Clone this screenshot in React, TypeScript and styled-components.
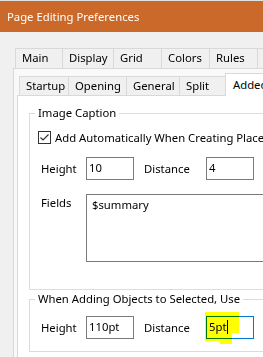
import React from "react";
import styled, { createGlobalStyle } from "styled-components";

const GlobalStyle = createGlobalStyle`
  html, body { margin: 0; padding: 0; background: #f0f0f0; }
  body { font-family: "Noto Sans", "Segoe UI", sans-serif; font-size: 11.3px; color: #000; }
  * { box-sizing: border-box; }
`;

const Window = styled.div`
  width: 263px;
  height: 357px;
  overflow: hidden;
  background: #f0f0f0;
`;

const TopEdge = styled.div`
  height: 1px;
  background: #e2e2e2;
`;

const TitleBar = styled.div`
  height: 31px;
  background: #ca692a;
  color: #fff;
  display: flex;
  align-items: center;
  padding-left: 7px;
  font-size: 11.3px;
`;

const Body = styled.div`
  padding: 16px 0 0 13px;
`;

const TabStrip = styled.div<{ $indent: number; $height: number }>`
  display: flex;
  align-items: flex-end;
  height: ${(p) => p.$height}px;
  padding-left: ${(p) => p.$indent}px;
`;

const Tab = styled.div<{ $width: number; $height: number; $selected?: boolean }>`
  flex-shrink: 0;
  width: ${(p) => p.$width}px;
  height: ${(p) => (p.$selected ? p.$height + 4 : p.$height)}px;
  margin-bottom: ${(p) => (p.$selected ? -1 : 0)}px;
  margin-right: -1px;
  border: 1px solid #d9d9d9;
  border-bottom: none;
  background: ${(p) => (p.$selected ? "#ffffff" : "#f0f0f0")};
  position: relative;
  z-index: ${(p) => (p.$selected ? 1 : 0)};
  padding: ${(p) => (p.$selected ? 2 : 0)}px 0 0 ${(p) => (p.$selected ? 7 : 6)}px;
  line-height: ${(p) => p.$height - 2}px;
  white-space: nowrap;
`;

const OuterPanel = styled.div`
  width: 400px;
  height: 300px;
  border-top: 1px solid #d9d9d9;
  border-left: 1px solid #d9d9d9;
  background: #f9f9f9;
  padding: 7px 0 0 3px;
`;

const InnerPanel = styled.div`
  width: 400px;
  height: 300px;
  border-top: 1px solid #d9d9d9;
  border-left: 1px solid #d9d9d9;
  background: #ffffff;
  padding: 9px 0 0 11px;
`;

const Group = styled.fieldset<{ $gap?: number }>`
  margin: ${(p) => p.$gap ?? 0}px 0 0 0;
  padding: 0;
  width: 320px;
  min-width: 0;
  border: 1px solid #dcdcdc;
`;

const Legend = styled.legend`
  margin-left: 5px;
  padding: 0 3px;
  line-height: 16px;
  font-size: 11.3px;
`;

const GroupBody = styled.div<{ $top: number; $bottom: number }>`
  display: flex;
  flex-direction: column;
  padding: ${(p) => p.$top}px 0 ${(p) => p.$bottom}px 8px;
`;

const CheckRow = styled.label`
  display: flex;
  align-items: center;
  gap: 4px;
  height: 13px;
  white-space: nowrap;
`;

const CheckBox = styled.span`
  flex-shrink: 0;
  width: 13px;
  height: 13px;
  border: 1px solid #333333;
  background: #fff;
  display: flex;
  align-items: center;
  justify-content: center;
`;

const FieldRow = styled.div<{ $top: number; $alignTop?: boolean }>`
  display: flex;
  align-items: ${(p) => (p.$alignTop ? "flex-start" : "center")};
  margin-top: ${(p) => p.$top}px;
  padding-left: 3px;
`;

const Label = styled.span<{ $width: number; $pad?: number }>`
  flex-shrink: 0;
  width: ${(p) => p.$width}px;
  padding-top: ${(p) => p.$pad ?? 0}px;
  line-height: 16px;
`;

const TextBox = styled.div<{ $focused?: boolean }>`
  position: relative;
  flex-shrink: 0;
  width: 48px;
  height: 23px;
  border: 1px solid ${(p) => (p.$focused ? "#0078d7" : "#7a7a7a")};
  background: #fff;
  padding-left: 2px;
  line-height: 20px;
  margin-right: 10px;
`;

const TextArea = styled.div`
  flex-shrink: 0;
  width: 200px;
  height: 68px;
  border: 1px solid #7a7a7a;
  background: #fff;
  padding: 2px 5px;
  line-height: 16px;
`;

const Highlight = styled.svg`
  position: absolute;
  left: -3px;
  top: -6px;
  mix-blend-mode: multiply;
  pointer-events: none;
`;

const BoxText = styled.span`
  position: relative;
  display: inline-flex;
  align-items: center;
`;

const Caret = styled.span`
  display: inline-block;
  width: 1px;
  height: 14px;
  background: #000;
`;

const outerTabs = [
  { label: "Main", width: 48 },
  { label: "Display", width: 52 },
  { label: "Grid", width: 49 },
  { label: "Colors", width: 49 },
  { label: "Rules", width: 49 },
  { label: "", width: 60 },
];

const innerTabs = [
  { label: "Startup", width: 50 },
  { label: "Opening", width: 59 },
  { label: "General", width: 54 },
  { label: "Split", width: 47 },
  { label: "Added Objects", width: 100, selected: true },
];

export default function App() {
  return (
    <>
      <GlobalStyle />
      <Window>
        <TopEdge />
        <TitleBar>Page Editing Preferences</TitleBar>
        <Body>
          <TabStrip $indent={2} $height={20}>
            {outerTabs.map((t, i) => (
              <Tab key={i} $width={t.width} $height={20}>
                {t.label}
              </Tab>
            ))}
          </TabStrip>
          <OuterPanel>
            <TabStrip $indent={2} $height={19}>
              {innerTabs.map((t) => (
                <Tab key={t.label} $width={t.width} $height={19} $selected={t.selected}>
                  {t.label}
                </Tab>
              ))}
            </TabStrip>
            <InnerPanel>
              <Group>
                <Legend>Image Caption</Legend>
                <GroupBody $top={10} $bottom={27}>
                  <CheckRow>
                    <CheckBox>
                      <svg width="11" height="11" viewBox="0 0 11 11">
                        <path d="M1.5 5.5 L4 8 L9.5 2.5" fill="none" stroke="#333" strokeWidth="1.2" />
                      </svg>
                    </CheckBox>
                    Add Automatically When Creating Placeholders
                  </CheckRow>
                  <FieldRow $top={13}>
                    <Label $width={45}>Height</Label>
                    <TextBox>10</TextBox>
                    <Label $width={62}>Distance</Label>
                    <TextBox>4</TextBox>
                  </FieldRow>
                  <FieldRow $top={14} $alignTop>
                    <Label $width={45} $pad={1}>Fields</Label>
                    <TextArea>$summary</TextArea>
                  </FieldRow>
                </GroupBody>
              </Group>
              <Group $gap={1}>
                <Legend>When Adding Objects to Selected, Use</Legend>
                <GroupBody $top={9} $bottom={12}>
                  <FieldRow $top={0}>
                    <Label $width={45}>Height</Label>
                    <TextBox>110pt</TextBox>
                    <Label $width={62}>Distance</Label>
                    <TextBox $focused>
                      <Highlight width="36" height="34" viewBox="0 0 36 34">
                        <path d="M1 1 H35 V22 H28 V33 H16 V30 H1 Z" fill="#ffff00" />
                      </Highlight>
                      <BoxText>
                        5pt
                        <Caret />
                      </BoxText>
                    </TextBox>
                  </FieldRow>
                </GroupBody>
              </Group>
            </InnerPanel>
          </OuterPanel>
        </Body>
      </Window>
    </>
  );
}
